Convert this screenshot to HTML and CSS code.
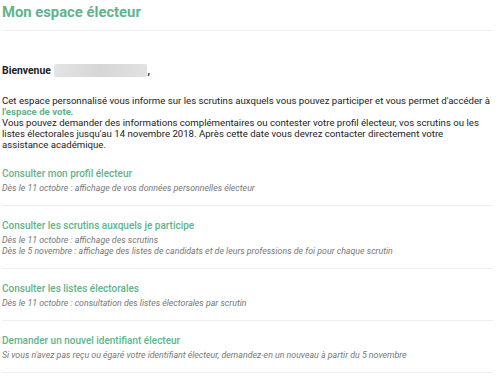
FILE: index.html
```html
<!DOCTYPE html>
<html lang="fr">
<head>
    <meta charset="UTF-8">
    <title>Mon espace électeur</title>
    <link rel="stylesheet" href="styles.css">
</head>
<body>
    <div class="page">
        <header class="page-header">
            <h1>Mon espace électeur</h1>
        </header>

        <p class="welcome">Bienvenue <span class="blurred-name"></span>,</p>

        <p class="intro">
            Cet espace personnalisé vous informe sur les scrutins auxquels vous pouvez participer et vous permet d'accéder à <a href="#">l'espace de vote</a>.<br>
            Vous pouvez demander des informations complémentaires ou contester votre profil électeur, vos scrutins ou les listes électorales jusqu'au 14 novembre 2018. Après cette date vous devrez contacter directement votre <span class="nowrap">assistance académique.</span>
        </p>

        <ul class="links">
            <li>
                <a href="#">Consulter mon profil électeur</a>
                <p>Dès le 11 octobre : affichage de vos données personnelles électeur</p>
            </li>
            <li>
                <a href="#">Consulter les scrutins auxquels je participe</a>
                <p>Dès le 11 octobre : affichage des scrutins</p>
                <p>Dès le 5 novembre : affichage des listes de candidats et de leurs professions de foi pour chaque scrutin</p>
            </li>
            <li>
                <a href="#">Consulter les listes électorales</a>
                <p>Dès le 11 octobre : consultation des listes électorales par scrutin</p>
            </li>
            <li>
                <a href="#">Demander un nouvel identifiant électeur</a>
                <p>Si vous n'avez pas reçu ou égaré votre identifiant électeur, demandez-en un nouveau à partir du 5 novembre</p>
            </li>
        </ul>
    </div>
</body>
</html>
```

FILE: styles.css
```css
:root {
    --green: #5eb48d;
    --text-color: #222;
    --muted: #777;
    --rule: #eeeeee;
}

body {
    margin: 0;
    font-family: 'Roboto', sans-serif;
    color: var(--text-color);
    background: #fff;
}

.page {
    width: 491px;
    padding: 0 2px;
}

.page-header {
    border-bottom: 1px solid var(--rule);
    padding: 4px 0 9px;
}

.page-header h1 {
    margin: 0;
    font-size: 14.8px;
    font-weight: 700;
    color: var(--green);
    line-height: 17px;
}

.welcome {
    margin: 33px 0 0;
    font-size: 10.4px;
    font-weight: 700;
    line-height: 14px;
}

.blurred-name {
    display: inline-block;
    width: 93px;
    height: 13px;
    vertical-align: -3px;
    background: linear-gradient(90deg, #e4e4e4, #d6d6d6 50%, #e2e2e2);
    border-radius: 2px;
    margin-left: 1px;
}

.intro {
    margin: 17px 0 0;
    font-size: 9.65px;
    line-height: 11px;
}

.intro a {
    color: var(--green);
    font-weight: 700;
    text-decoration: none;
}

.nowrap {
    white-space: nowrap;
}

.links {
    list-style: none;
    margin: 9px 0 0;
    padding: 0;
}

.links li {
    border-bottom: 1px solid var(--rule);
    padding: 8px 0 11px;
}

.links li + li {
    padding-top: 13px;
}

.links a {
    display: block;
    color: var(--green);
    font-size: 10px;
    font-weight: 500;
    text-decoration: none;
    line-height: 14px;
    margin-bottom: 2px;
}

.links p {
    margin: 0;
    font-size: 8.8px;
    font-style: italic;
    color: var(--muted);
    line-height: 11px;
}
```
